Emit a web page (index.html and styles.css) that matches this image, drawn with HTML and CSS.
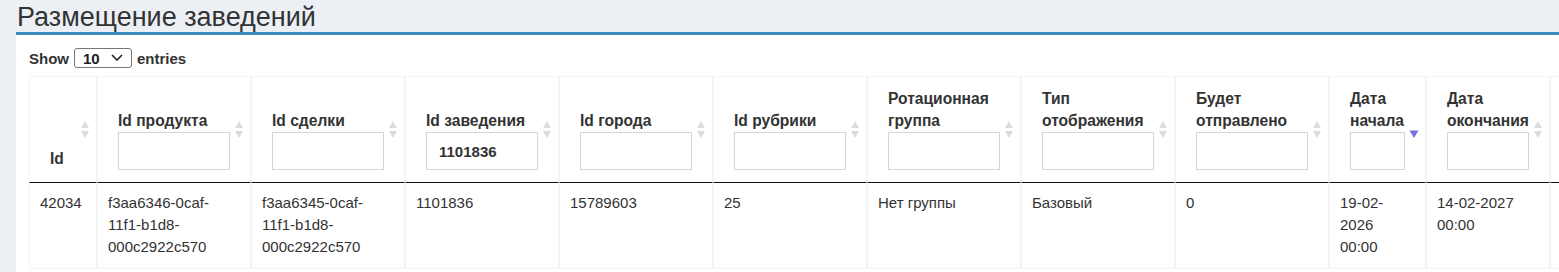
FILE: index.html
```html
<!DOCTYPE html>
<html lang="ru">
<head>
<meta charset="utf-8">
<title>Размещение заведений</title>
<link rel="stylesheet" href="styles.css">
</head>
<body>
<h1 class="page-title">Размещение заведений</h1>
<div class="box">
  <div class="length">
    <span>Show</span>
    <span class="select-wrap">
      <select class="length-select">
        <option>10</option>
        <option>25</option>
        <option>50</option>
        <option>100</option>
      </select>
      <svg class="chev" width="12" height="7" viewBox="0 0 12 7"><polyline points="1,1 6,6 11,1" fill="none" stroke="#222" stroke-width="1.6"/></svg>
    </span>
    <span>entries</span>
  </div>
  <table class="grid">
    <colgroup>
      <col class="c-id">
      <col class="c-std">
      <col class="c-std">
      <col class="c-std">
      <col class="c-std">
      <col class="c-std">
      <col class="c-std">
      <col class="c-std">
      <col class="c-std">
      <col class="c-start">
      <col class="c-end">
      <col class="c-std">
    </colgroup>
    <thead>
      <tr>
        <th><div class="th-title">Id</div><svg class="sort-icon" width="10" height="19" viewBox="0 0 10 19"><path d="M5 1 L9 8 H1Z" fill="#dcdcdc"/><path d="M1 11 H9 L5 18Z" fill="#dcdcdc"/></svg></th>
        <th><div class="th-title">Id продукта</div><input class="filter" type="text"><svg class="sort-icon" width="10" height="19" viewBox="0 0 10 19"><path d="M5 1 L9 8 H1Z" fill="#dcdcdc"/><path d="M1 11 H9 L5 18Z" fill="#dcdcdc"/></svg></th>
        <th><div class="th-title">Id сделки</div><input class="filter" type="text"><svg class="sort-icon" width="10" height="19" viewBox="0 0 10 19"><path d="M5 1 L9 8 H1Z" fill="#dcdcdc"/><path d="M1 11 H9 L5 18Z" fill="#dcdcdc"/></svg></th>
        <th><div class="th-title">Id заведения</div><input class="filter" type="text" value="1101836"><svg class="sort-icon" width="10" height="19" viewBox="0 0 10 19"><path d="M5 1 L9 8 H1Z" fill="#dcdcdc"/><path d="M1 11 H9 L5 18Z" fill="#dcdcdc"/></svg></th>
        <th><div class="th-title">Id города</div><input class="filter" type="text"><svg class="sort-icon" width="10" height="19" viewBox="0 0 10 19"><path d="M5 1 L9 8 H1Z" fill="#dcdcdc"/><path d="M1 11 H9 L5 18Z" fill="#dcdcdc"/></svg></th>
        <th><div class="th-title">Id рубрики</div><input class="filter" type="text"><svg class="sort-icon" width="10" height="19" viewBox="0 0 10 19"><path d="M5 1 L9 8 H1Z" fill="#dcdcdc"/><path d="M1 11 H9 L5 18Z" fill="#dcdcdc"/></svg></th>
        <th><div class="th-title">Ротационная группа</div><input class="filter" type="text"><svg class="sort-icon" width="10" height="19" viewBox="0 0 10 19"><path d="M5 1 L9 8 H1Z" fill="#dcdcdc"/><path d="M1 11 H9 L5 18Z" fill="#dcdcdc"/></svg></th>
        <th><div class="th-title">Тип отображения</div><input class="filter" type="text"><svg class="sort-icon" width="10" height="19" viewBox="0 0 10 19"><path d="M5 1 L9 8 H1Z" fill="#dcdcdc"/><path d="M1 11 H9 L5 18Z" fill="#dcdcdc"/></svg></th>
        <th><div class="th-title">Будет отправлено</div><input class="filter" type="text"><svg class="sort-icon" width="10" height="19" viewBox="0 0 10 19"><path d="M5 1 L9 8 H1Z" fill="#dcdcdc"/><path d="M1 11 H9 L5 18Z" fill="#dcdcdc"/></svg></th>
        <th><div class="th-title">Дата начала</div><input class="filter" type="text"><svg class="sort-icon" width="10" height="19" viewBox="0 0 10 19"><path d="M0.5 10.5 H9.5 L5 18Z" fill="#7474dc"/></svg></th>
        <th><div class="th-title">Дата окончания</div><input class="filter" type="text"><svg class="sort-icon" width="10" height="19" viewBox="0 0 10 19"><path d="M5 1 L9 8 H1Z" fill="#dcdcdc"/><path d="M1 11 H9 L5 18Z" fill="#dcdcdc"/></svg></th>
        <th></th>
      </tr>
    </thead>
    <tbody>
      <tr>
        <td>42034</td>
        <td>f3aa6346-0caf-11f1-b1d8-000c2922c570</td>
        <td>f3aa6345-0caf-11f1-b1d8-000c2922c570</td>
        <td>1101836</td>
        <td>15789603</td>
        <td>25</td>
        <td>Нет группы</td>
        <td>Базовый</td>
        <td>0</td>
        <td>19-02-2026 00:00</td>
        <td>14-02-2027 00:00</td>
        <td></td>
      </tr>
    </tbody>
  </table>
</div>
</body>
</html>
```

FILE: styles.css
```css
* {
  box-sizing: border-box;
}

html,
body {
  margin: 0;
}

body {
  background: #ecf0f5;
  font-family: "Liberation Sans", Arial, sans-serif;
  font-size: 15px;
  color: #333;
  overflow: hidden;
}

.page-title {
  margin: 0;
  padding: 2px 0 0 17px;
  font-size: 27px;
  line-height: 30px;
  font-weight: normal;
  color: #333;
}

.box {
  margin-left: 16px;
  background: #fff;
  border-top: 3px solid #3c8dbc;
  padding: 13px 0 0 13px;
  overflow: hidden;
  min-height: 245px;
}

.length {
  display: flex;
  align-items: center;
  gap: 5px;
  height: 20px;
  margin-bottom: 8px;
  font-weight: bold;
}

.select-wrap {
  display: inline-flex;
  align-items: center;
  width: 58px;
  height: 20px;
  border: 1px solid #767676;
  border-radius: 3px;
  background: #fff;
}

.length-select {
  appearance: none;
  -webkit-appearance: none;
  border: 0;
  background: transparent;
  font: bold 15px "Liberation Sans", Arial, sans-serif;
  color: #222;
  width: 36px;
  height: 18px;
  padding: 0 0 0 8px;
  margin: 0;
  outline: none;
}

.chev {
  display: block;
  margin-top: -2px;
}

.grid {
  border-collapse: separate;
  border-spacing: 0;
  table-layout: fixed;
  width: 1675px;
}

.c-id {
  width: 68px;
}

.c-std {
  width: 154px;
}

.c-start {
  width: 97px;
}

.c-end {
  width: 124px;
}

.grid th,
.grid td {
  border: 1px solid #f4f4f4;
  text-align: left;
}

.grid th {
  position: relative;
  vertical-align: bottom;
  padding: 11px 20px 12px 20px;
  font-size: 15.6px;
  font-weight: bold;
  line-height: 22px;
  border-bottom: 1px solid #111;
}

.th-title {
  line-height: 22px;
}

.filter {
  display: block;
  width: 100%;
  height: 38px;
  margin: 0;
  padding: 0 12px;
  border: 1px solid #d2d6de;
  border-radius: 0;
  background: #fff;
  font: bold 15px "Liberation Sans", Arial, sans-serif;
  color: #333;
  outline: none;
}

.sort-icon {
  position: absolute;
  right: 6px;
  top: 50%;
  margin-top: -10px;
  display: block;
}

.grid td {
  vertical-align: top;
  padding: 9px 10px 10px;
  line-height: 22px;
  border-top: 0;
}
```
